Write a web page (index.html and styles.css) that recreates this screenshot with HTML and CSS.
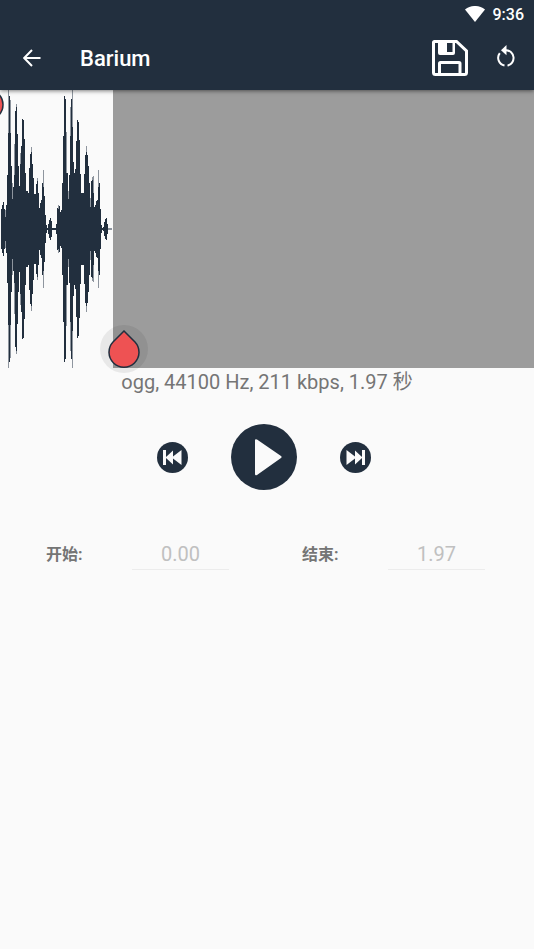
FILE: index.html
```html
<!DOCTYPE html>
<html lang="zh-CN">
<head>
<meta charset="utf-8">
<meta name="viewport" content="width=device-width, initial-scale=1">
<title>Barium</title>
<link rel="stylesheet" href="styles.css">
</head>
<body>
<header class="app-header">
  <div class="status-bar">
    <svg class="wifi" viewBox="0 0 20 16" aria-hidden="true"><path d="M0 3.5C6-1.2 14-1.2 20 3.5L10 16z"/></svg>
    <time>9:36</time>
  </div>
  <div class="toolbar">
    <button class="icon-button" type="button" aria-label="返回">
      <svg class="back-icon" viewBox="0 0 18 18"><path d="M17.5 9H1.5M9 1L1.2 9L9 17"/></svg>
    </button>
    <h1>Barium</h1>
    <button class="icon-button" type="button" aria-label="保存">
      <svg class="save-icon" viewBox="0 0 36 36"><path d="M2.5 1.5H24.5L34.5 11V32.5Q34.5 34.500 32.500 34.500H3.500Q1.500 34.500 1.500 32.500V2.500Q1.500 1.500 2.500 1.500z"/><path d="M7.500 34V23.500Q7.500 22.500 8.500 22.500H27Q28 22.500 28 23.500V34"/><path class="solid" d="M6 1H23V13Q23 15 21 15H8Q6 15 6 13zM15 3V12H20.500V3z"/></svg>
    </button>
    <button class="icon-button" type="button" aria-label="重置">
      <svg class="reset-icon" viewBox="0 0 20 24"><path class="arc" d="M10 5.200A7.800 7.800 0 0 1 11.500 20.600M8.500 20.600A7.800 7.800 0 0 1 3.800 8.200"/><path class="head" d="M10.500 0V10.200L5 5.200z"/></svg>
    </button>
  </div>
</header>
<main>
  <section class="editor" aria-label="波形">
    <svg class="wave" viewBox="0 0 113 278"><path class="wave-soft"/><path class="wave-body"/></svg>
    <div class="outside"></div>
    <svg class="marker marker-start" viewBox="0 0 32 38"><path d="M16 37L5 26A15 15 0 1 1 27 26z"/></svg>
    <div class="halo"><svg class="marker" viewBox="0 0 32 38"><path d="M16 1L27 12A15 15 0 1 1 5 12z"/></svg></div>
  </section>
  <p class="info">ogg, 44100 Hz, 211 kbps, 1.97 秒</p>
  <div class="controls">
    <button class="round" type="button" aria-label="上一个"><svg viewBox="0 0 31 31"><path d="M6 8H9V15L16 8.500V14.500L24.500 8V23L16 16.500V22.500L9 16V23H6z"/></svg></button>
    <button class="round play" type="button" aria-label="播放"><svg viewBox="0 0 66 66"><path d="M24 16.500Q24 14.500 26 15.500L50 32Q51.500 33 50 34L26 51Q24 52 24 50z"/></svg></button>
    <button class="round" type="button" aria-label="下一个"><svg viewBox="0 0 31 31"><path d="M25 8H22V15L15 8.500V14.500L6.500 8V23L15 16.500V22.500L22 16V23H25z"/></svg></button>
  </div>
  <form class="range">
    <div class="field"><label for="start">开始:</label><input id="start" type="text" value="0.00"></div>
    <div class="field"><label for="end">结束:</label><input id="end" type="text" value="1.97"></div>
  </form>
</main>
<script src="wave.js"></script>
</body>
</html>
```
FILE: styles.css
```css
* { box-sizing: border-box; }
body {
  margin: 0;
  min-height: 100vh;
  background: #fafafa;
  color: #757575;
  font-family: Roboto, "Noto Sans CJK SC", sans-serif;
}
button { padding: 0; border: 0; background: none; color: inherit; }
svg { display: block; }
.app-header {
  position: relative;
  z-index: 1;
  height: 90px;
  background: #222f3e;
  color: #fff;
  box-shadow: 0 1px 4px rgba(0, 0, 0, .5);
}
.status-bar {
  display: flex;
  justify-content: flex-end;
  align-items: center;
  gap: 8px;
  height: 28px;
  padding-right: 10px;
  font-size: 16px;
  font-weight: 500;
}
.wifi { width: 20px; height: 16px; fill: #fff; }
.toolbar {
  display: flex;
  align-items: center;
  height: 62px;
  padding: 0 18px 2px 23px;
  gap: 28px;
}
h1 { flex: 1; margin: 0 0 0 11px; padding-top: 2px; font-size: 22px; line-height: 30px; font-weight: 500; }
.icon-button svg { fill: none; stroke: #fff; }
.back-icon { width: 18px; height: 18px; stroke-width: 2; }
.save-icon { width: 36px; height: 36px; stroke-width: 3; }
.save-icon .solid { fill: #fff; fill-rule: evenodd; stroke: none; }
.reset-icon { width: 20px; height: 24px; margin-bottom: 2px; stroke-width: 2; }
.reset-icon .head { fill: #fff; stroke: none; }
.editor { position: relative; display: flex; height: 278px; }
.wave { width: 113px; height: 278px; }
.wave-body { fill: #222f3e; }
.wave-soft { fill: #8e959e; }
.outside { flex: 1; background: #9c9c9c; }
.marker { width: 32px; height: 38px; fill: #ee5253; stroke: #222f3e; stroke-width: 1.5; }
.marker-start { position: absolute; left: -28px; top: -1px; }
.halo {
  position: absolute;
  left: 100px;
  bottom: -5px;
  display: flex;
  justify-content: center;
  align-items: center;
  width: 48px;
  height: 48px;
  border-radius: 50%;
  background: rgba(0, 0, 0, .07);
}
.info { margin: 0; font-size: 20px; line-height: 28px; text-align: center; }
.controls {
  display: flex;
  justify-content: center;
  align-items: center;
  gap: 43px;
  margin-top: 28px;
  padding-right: 6px;
}
.round { width: 31px; height: 31px; border-radius: 50%; background: #222f3e; }
.round svg { width: 100%; height: 100%; fill: #fafafa; }
.play { width: 66px; height: 66px; }
.range {
  display: grid;
  grid-template-columns: 1fr 1fr;
  margin: 48px 11px 0;
}
.field { display: flex; align-items: center; padding: 0 38px 0 35px; justify-content: space-between; }
label { padding-bottom: 2px; font-size: 16px; font-weight: 700; }
input {
  width: 97px;
  height: 32px;
  padding: 0;
  border: 0;
  border-bottom: 1px solid #ececec;
  background: none;
  color: #c0c0c0;
  font: 20px Roboto, sans-serif;
  text-align: center;
}
```
FILE: wave.js
```js
// Distance from the top edge to the waveform for each pixel column.
const CENTER = 139;
const tops = [
  139, 119, 115, 112, 119, 127, 115, 85, 43, 6, 43, 76, 109, 97, 85, 21, 17, 44, 76, 96,
  74, 56, 29, 30, 49, 83, 101, 101, 103, 78, 64, 62, 74, 88, 104, 104, 94, 91, 103, 118,
  113, 110, 93, 97, 106, 125, 135, 138, 134, 130, 128, 131, 138, 138, 138, 138, 134, 118, 119, 116,
  122, 120, 93, 46, 6, 9, 83, 83, 109, 85, 46, 9, 37, 72, 83, 79, 51, 30, 32, 50,
  84, 103, 103, 103, 84, 65, 62, 65, 76, 93, 117, 91, 90, 103, 117, 115, 111, 110, 97, 93,
  119, 135, 138, 137, 132, 129, 128, 134
];
// Fainter peaks behind the body.
const soft = { 5: 120, 8: 0, 10: 10, 12: 93, 14: 54, 16: 14, 20: 63, 31: 57, 37: 88, 43: 80, 58: 115, 66: 42, 68: 101, 70: 17, 72: 0, 86: 56, 90: 108, 92: 87, 93: 86, 98: 80, 108: 138, 109: 138, 110: 138, 111: 138 };
const column = (x, y) => `M${x} ${y}h1V${2 * CENTER - y}h-1z`;
document.querySelector(".wave-body").setAttribute("d", tops.map((y, x) => column(x, y)).join(""));
document.querySelector(".wave-soft").setAttribute("d", Object.entries(soft).map(([x, y]) => column(x, y)).join(""));
```
